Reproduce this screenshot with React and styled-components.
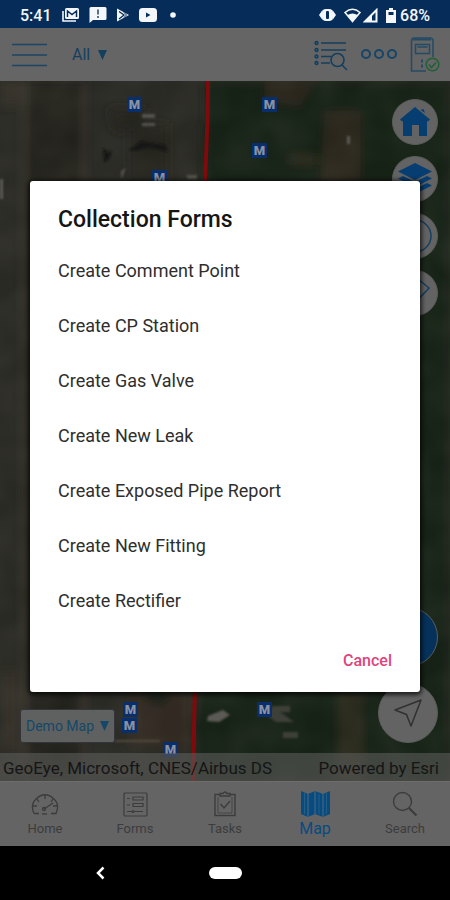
import styled, { createGlobalStyle } from "styled-components";

/* ---------------- global ---------------- */
const GlobalStyle = createGlobalStyle`
  * {
    box-sizing: border-box;
  }
  body {
    margin: 0;
    background-color: #000;
    font-family: Roboto, "Liberation Sans", sans-serif;
  }
  button, select {
    margin: 0;
    padding: 0;
    border: 0;
    background: none;
    color: inherit;
    font: inherit;
    cursor: pointer;
  }
  svg {
    display: block;
    flex: none;
  }
`;

const StyledScreen = styled.div`
  min-height: 100vh;
  display: flex;
  flex-direction: column;
`;

/* ---------------- status bar ---------------- */
const StyledStatus = styled.header`
  height: 28px;
  padding: 2px 20px 0;
  background-color: #062d5a;
  color: #f4f7fa;
  font-size: 16px;
  font-weight: 500;
  display: flex;
  justify-content: space-between;
  align-items: center;
`;
const StyledStatusGroup = styled.div`
  display: flex;
  align-items: center;
  gap: ${(props) => props.$gap}px;
`;

/* ---------------- app ---------------- */
const StyledApp = styled.div`
  flex: 1;
  position: relative;
  display: flex;
  flex-direction: column;
`;
const StyledToolbar = styled.nav`
  height: 53px;
  padding: 0 10px 0 12px;
  background-color: #656565;
  color: #153f5f;
  display: flex;
  align-items: center;
  justify-content: space-between;
`;
const StyledToolbarGroup = styled.div`
  display: flex;
  align-items: center;
  gap: ${(props) => props.$gap}px;
`;
const StyledPicker = styled.div`
  display: flex;
  align-items: center;
  gap: 8px;
  font-size: 16px;
`;
const StyledPickerSelect = styled.select`
  appearance: none;
  field-sizing: content;
`;

/* ---------------- map ---------------- */
const StyledMap = styled.main`
  flex: 1;
  position: relative;
  overflow: hidden;
  background-color: #292923;
  display: flex;
  flex-direction: column;
  justify-content: flex-end;
`;
const StyledAerial = styled.svg`
  position: absolute;
  top: 0;
  left: 0;
  width: 100%;
  height: 100%;
`;
const StyledMarker = styled.span`
  position: absolute;
  left: ${(props) => props.$x}px;
  top: ${(props) => props.$y}px;
  width: 15px;
  height: 15px;
  background-color: #082e6c;
  color: #8992a3;
  font-size: 13px;
  font-weight: 900;
  line-height: 15px;
  text-align: center;
`;
const StyledMapControls = styled.div`
  position: relative;
  flex: 1;
  padding: 18px 12px 10px 20px;
  display: flex;
  justify-content: space-between;
  align-items: stretch;
`;
const StyledMapColumn = styled.div`
  display: flex;
  flex-direction: column;
  justify-content: ${(props) => (props.$end ? "flex-end" : "space-between")};
  align-items: flex-end;
`;
const StyledMapButtons = styled.div`
  display: flex;
  flex-direction: column;
  align-items: flex-end;
  gap: ${(props) => props.$gap}px;
`;
const StyledRound = styled.button`
  width: ${(props) => props.$size}px;
  height: ${(props) => props.$size}px;
  border-radius: 50%;
  border: 1px solid #5b5d5b;
  background-color: ${(props) => (props.$primary ? "#05315a" : "#626362")};
  color: #073e72;
  display: flex;
  align-items: center;
  justify-content: center;
`;
const StyledBasemap = styled.div`
  height: 34px;
  padding: 0 5px;
  border: 1px solid #34353a;
  border-radius: 3px;
  background-color: #5f6060;
  color: #154868;
  font-size: 14px;
  display: flex;
  align-items: center;
  gap: 6px;
`;
const StyledCredits = styled.footer`
  position: relative;
  height: 28px;
  padding: 2px 11px 0 3px;
  background-color: rgba(92, 92, 90, 0.6);
  color: #151515;
  font-size: 17px;
  white-space: nowrap;
  display: flex;
  align-items: center;
  justify-content: space-between;
`;

/* ---------------- tabs ---------------- */
const StyledTabs = styled.nav`
  height: 65px;
  background-color: #646464;
  border-top: 1px solid #6d6d6b;
  display: flex;
`;
const StyledTab = styled.button`
  flex: 1;
  padding-bottom: 8px;
  color: ${(props) => (props.$active ? "#084b80" : "#3c3c3c")};
  font-size: ${(props) => (props.$active ? 16 : 13)}px;
  line-height: 18px;
  display: flex;
  flex-direction: column;
  align-items: center;
  justify-content: flex-end;
  gap: 3px;
`;

/* ---------------- dialog ---------------- */
const StyledOverlay = styled.div`
  position: absolute;
  inset: 0;
  padding: 0 30px 2px;
  display: flex;
  align-items: center;
`;
const StyledDialog = styled.section`
  flex: 1;
  padding: 25px 28px 17px;
  border-radius: 3px;
  background-color: #fff;
  box-shadow: 0 1px 4px 2px rgba(0, 0, 0, 0.7);
  color: #2e2e2e;
`;
const StyledDialogTitle = styled.h1`
  margin: 0;
  color: #151515;
  font-size: 23px;
  font-weight: 500;
  line-height: 28px;
`;
const StyledFormList = styled.ul`
  margin: 9px 0 19px;
  padding: 0;
  list-style: none;
`;
const StyledFormButton = styled.button`
  width: 100%;
  height: 55px;
  font-size: 18px;
  text-align: left;
`;
const StyledDialogActions = styled.div`
  display: flex;
  justify-content: flex-end;
`;
const StyledCancel = styled.button`
  height: 28px;
  color: #e0447a;
  font-size: 16px;
  font-weight: 500;
`;

/* ---------------- system navigation ---------------- */
const StyledSystemNav = styled.footer`
  height: 54px;
  background-color: #000;
  display: grid;
  grid-template-columns: 2fr 1fr 2fr;
  align-items: center;
`;
const StyledBack = styled.button`
  justify-self: center;
  padding: 6px;
  margin-left: 20px;
`;
const StyledHomePill = styled.button`
  justify-self: center;
  width: 33px;
  height: 12px;
  border-radius: 6px;
  background-color: #fff;
`;

/* ---------------- data ---------------- */
const forms = [
  "Create Comment Point",
  "Create CP Station",
  "Create Gas Valve",
  "Create New Leak",
  "Create Exposed Pipe Report",
  "Create New Fitting",
  "Create Rectifier",
];

const markers = [
  [127, 16],
  [262, 16],
  [252, 62],
  [152, 89],
  [123, 621],
  [122, 637],
  [257, 621],
  [163, 661],
];

/* ---------------- icons ---------------- */
const Arrow = () => (
  <svg width="9" height="10" viewBox="0 0 9 10" fill="currentColor">
    <path d="M0 0h9L4.500 10z" />
  </svg>
);

const StatusLeftIcons = () => (
  <>
    <svg width="19" height="16" viewBox="0 0 19 16">
      <path d="M2 4v10h13" fill="none" stroke="#f4f7fa" strokeWidth="1.600" />
      <rect x="4" y="1" width="14" height="11" rx="1.500" fill="#f4f7fa" />
      <path d="M6.500 10V4l4.500 3.600L15.500 4v6" fill="none" stroke="#062d5a" strokeWidth="1.500" />
    </svg>
    <svg width="18" height="16" viewBox="0 0 18 16">
      <path d="M2 0h14q1.500 0 1.500 1.500v10q0 1.500-1.500 1.500H4l-3.500 3V1.500Q.500 0 2 0z" fill="#f4f7fa" />
      <path d="M9 2.500v5M9 9v2" stroke="#566f8b" strokeWidth="2" />
    </svg>
    <svg width="14" height="16" viewBox="0 0 14 16">
      <path d="M1 1.500v13L13 8z" fill="#f4f7fa" />
      <path d="M3 4.500 8 8l-5 4" fill="none" stroke="#062d5a" strokeWidth="1.300" />
      <path d="m8 5.500 2.500 2.500L8 10.500" fill="none" stroke="#062d5a" strokeWidth="1" />
    </svg>
    <svg width="18" height="14" viewBox="0 0 18 14">
      <rect width="18" height="14" rx="3.500" fill="#f4f7fa" />
      <path d="M7 4.500v5L11.500 7z" fill="#062d5a" />
    </svg>
    <svg width="10" height="6" viewBox="0 0 10 6">
      <circle cx="7" cy="3" r="2.800" fill="#f4f7fa" />
    </svg>
  </>
);

const StatusRightIcons = () => (
  <>
    <svg width="17" height="14" viewBox="0 0 17 14">
      <path d="M0 7 3.500 2v10zM17 7l-3.500-5v10z" fill="#f4f7fa" />
      <rect x="3" y="1" width="11" height="12" rx="4" fill="#f4f7fa" />
      <rect x="7" y="3" width="3" height="8" rx="1" fill="#062d5a" />
    </svg>
    <StyledStatusGroup $gap={2}>
      <svg width="17" height="15" viewBox="0 0 17 15">
        <path d="M1 4.500Q8.500-2 16 4.500L8.500 13.500z" fill="none" stroke="#f4f7fa" strokeWidth="1.600" />
        <path d="M3.500 7Q8.500 4 13.500 7l-5 7z" fill="#f4f7fa" />
      </svg>
      <svg width="15" height="15" viewBox="0 0 15 15">
        <path d="M2 13.500 13.500 2v11.500z" fill="none" stroke="#f4f7fa" strokeWidth="2" />
        <path d="M2 13.500 9 6.500v7z" fill="#f4f7fa" />
      </svg>
    </StyledStatusGroup>
    <StyledStatusGroup $gap={4}>
      <svg width="10" height="15" viewBox="0 0 10 15">
        <path d="M3 0h4v2h3v13H0V2h3z" fill="#f4f7fa" />
        <path d="M2.500 4h5v3h-5z" fill="#062d5a" />
      </svg>
      <span>68%</span>
    </StyledStatusGroup>
  </>
);

const MenuIcon = () => (
  <svg width="35" height="24" viewBox="0 0 35 24" stroke="#1b4665" strokeWidth="1.600">
    <path d="M0 1.500h35M0 12h35M0 22.500h35" />
  </svg>
);

const ListSearchIcon = () => (
  <svg width="34" height="32" viewBox="0 0 34 32" fill="none" stroke="#153f5f" strokeWidth="1.600">
    <path d="M7 4h25M7 11h25M7 17.500h10M7 24h9" />
    <g fill="#315b72" strokeWidth="1.400">
      <circle cx="2.500" cy="4" r="1.500" />
      <circle cx="2.500" cy="11" r="1.500" />
      <circle cx="2.500" cy="17.500" r="1.500" />
      <circle cx="2.500" cy="24" r="1.500" />
    </g>
    <circle cx="23.500" cy="21" r="6.500" />
    <path d="m28 26 5 5" />
  </svg>
);

const DotsIcon = () => (
  <svg width="38" height="12" viewBox="0 0 38 12" fill="none" stroke="#164568" strokeWidth="2">
    <circle cx="6" cy="5" r="4" />
    <circle cx="19" cy="5" r="4" />
    <circle cx="32" cy="5" r="4" />
  </svg>
);

const DeviceIcon = () => (
  <svg width="30" height="36" viewBox="0 0 30 36" fill="none" stroke="#234a66" strokeWidth="1.500">
    <path d="M16 34H1.500V4Q1.500 1 4 1h16q3 0 3 3V20" />
    <path d="M3 2.500h18" strokeWidth="2" />
    <rect x="5.500" y="7.500" width="14" height="9" />
    <path d="M7.500 10h10" />
    <path d="M12 22.500v3M12 27.500v3" strokeWidth="2" />
    <circle cx="22.500" cy="27.500" r="6.300" fill="#656565" stroke="#1e6134" />
    <path d="m19 27.500 2.500 3 4.500-5" stroke="#1e6134" />
  </svg>
);

const HouseIcon = () => (
  <svg width="30" height="30" viewBox="0 0 30 30" fill="currentColor">
    <path d="M15 0 30 12.500l-2 2-1-.500v15h-8V18h-7v11H3V14l-1 .500-2-2z" />
    <path d="m20.500 3 3-1 1.500 4z" />
  </svg>
);

const LayersIcon = () => (
  <svg width="36" height="32" viewBox="0 0 36 32" fill="currentColor">
    <path d="M18 0 35 8.500 18 17 1 8.500z" />
    <path d="m6 13-5 2.500L18 24l17-8.500-5-2.500-12 6z" />
    <path d="m6 20-5 2.500L18 31l17-8.500-5-2.500-12 6z" />
  </svg>
);

const CompassIcon = () => (
  <svg width="36" height="36" viewBox="0 0 36 36" fill="none" stroke="#173f60">
    <circle cx="18" cy="18" r="16" strokeWidth="1.500" />
    <path d="m18 7 4 11-4 11-4-11z" />
  </svg>
);

const EraserIcon = () => (
  <svg width="34" height="32" viewBox="0 0 34 32" fill="none" stroke="#173f60" strokeWidth="1.600">
    <path d="M20 2 31 11 14 29 3 20z" />
    <path d="m11 12 10 9" />
  </svg>
);

const LocateIcon = () => (
  <svg width="30" height="30" viewBox="0 0 30 30" fill="none" stroke="#303133" strokeWidth="1.500">
    <path d="M28 2 18 28l-4.500-11.500L2 12z" strokeLinejoin="round" />
  </svg>
);

const GaugeIcon = () => (
  <svg width="28" height="24" viewBox="0 0 28 24" fill="none" stroke="currentColor" strokeWidth="1.300">
    <path d="M3 20.500Q-1 12 5 6q9-8.500 18 0 6 6 2 14.500h-5M3 20.500h5" />
    <path d="M14 2v4M6 6l2 3M2 13h4M22 6l-2 3M26 13h-4" />
    <path d="m13 16 9-6" />
    <circle cx="13" cy="16" r="1.500" />
    <path d="M11 21h5" />
  </svg>
);

const FormsIcon = () => (
  <svg width="25" height="25" viewBox="0 0 25 25" fill="none" stroke="currentColor" strokeWidth="1.200">
    <rect x="1" y="1" width="23" height="23" rx="1" />
    <path d="M4 6.500h3M4 13h3M4 19.500h5M10 5h10v3H10zM10 11.500h10v3H10zM11 19.500h9" />
    <circle cx="10" cy="19.500" r="1" />
  </svg>
);

const TasksIcon = () => (
  <svg width="22" height="26" viewBox="0 0 22 26" fill="none" stroke="currentColor" strokeWidth="1.400">
    <path d="M6 3.500H1v21h20v-21h-5" />
    <path d="M4 6v16h14V6" strokeWidth="0.800" />
    <path d="M6 5V2.500h3Q11-.500 13 2.500h3V5z" />
    <path d="m6.500 13 3.500 4 6-7" />
  </svg>
);

const MapIcon = () => (
  <svg width="29" height="26" viewBox="0 0 29 26">
    <path d="m0 0 7 3 7-3 8 3 7-3v23l-7 3-8-3-7 3-7-3z" fill="#084b80" />
    <path d="M7 3v23M14 0v23M22 3v23" stroke="#41687f" strokeWidth="1.200" />
    <path d="M3.500 2v21M18 3v20M25.500 2v21" stroke="#265e83" />
  </svg>
);

const SearchIcon = () => (
  <svg width="26" height="26" viewBox="0 0 26 26" fill="none" stroke="currentColor">
    <circle cx="10.500" cy="10.500" r="9" strokeWidth="1.400" />
    <path d="m17 17 7.500 7.500" strokeWidth="2.200" />
  </svg>
);

const tabs = [
  { label: "Home", icon: <GaugeIcon /> },
  { label: "Forms", icon: <FormsIcon /> },
  { label: "Tasks", icon: <TasksIcon /> },
  { label: "Map", icon: <MapIcon />, active: true },
  { label: "Search", icon: <SearchIcon /> },
];

/* ---------------- aerial ---------------- */
const Aerial = () => (
  <StyledAerial viewBox="0 0 450 700" preserveAspectRatio="none" aria-hidden="true">
    <defs>
      <filter id="soft" x="-10%" y="-10%" width="120%" height="120%">
        <feGaussianBlur stdDeviation="4" />
      </filter>
      <filter id="fine">
        <feGaussianBlur stdDeviation="1" />
      </filter>
      <filter id="ground" x="0" y="0" width="100%" height="100%">
        <feTurbulence type="fractalNoise" baseFrequency="0.027" numOctaves="2" seed="8" />
        <feColorMatrix values="0 0 0 0 0.25  0 0 0 0 0.23  0 0 0 0 0.18  0.9 0 0 0 -0.25" />
      </filter>
    </defs>
    <path d="M0 0h450v700H0z" fill="#2a2a25" />
    <g filter="url(#soft)">
      <path d="M28 0h52v700H28z" fill="#24241f" />
      <path d="M22 0h5v700h-5zM81 0h4v700h-4z" fill="#35332b" />
      <path d="M0 0h22v25H0zM0 590h20v80H0z" fill="#302f26" />
      <path d="M205 0h245v700H194z" fill="#182018" />
      <path d="M265 0h50l-15 25-35-5zM325 30h35v80h-40z" fill="#2a271f" />
      <path d="M290 72h25v12h-25zM338 610h25v90h-25z" fill="#29291f" />
      <path d="M108 27h38v23h-32zM128 42h40v60h-40z" fill="#22221e" />
      <path d="M132 610h60v55h-60z" fill="#302c22" />
      <ellipse cx="157" cy="615" rx="12" ry="10" fill="#1d201a" />
    </g>
    <path d="M0 0h450v700H0z" filter="url(#ground)" opacity="0.2" />
    <g filter="url(#fine)">
      <path d="M142 33h13v4h-13zM142 42h13v3h-13z" fill="#54534e" />
      <path d="M103 67l4 4 5-1-3 8-5 3zM129 69l13-9 7 2 16 2 3 7-20-5-12 4z" fill="#161614" />
      <path d="m121 90 5-3-5 12zM186 94h11v4h-9z" fill="#55534c" />
      <path d="M208 635l15-6 7 5-11 7-12-1zM0 98h3v20H0z" fill="#5b5a54" />
      <path d="M272 625h18v6h-10l14 10h-18l-8-6zM283 651h15v6h-15z" fill="#3c3f38" />
      <path d="M347 55h3v8h-3z" fill="#5b5c55" />
      <path d="M115 659h45v2h-45z" fill="#504b3d" />
    </g>
    <path d="M208 0q0 35-3 100L193 700" fill="none" stroke="#7f0a0c" strokeWidth="4" />
  </StyledAerial>
);

/* ---------------- jsx ---------------- */
const App = () => {
  return (
    <StyledScreen>
      <GlobalStyle />

      <StyledStatus>
        <StyledStatusGroup $gap={9}>
          <span>5:41</span>
          <StatusLeftIcons />
        </StyledStatusGroup>
        <StyledStatusGroup $gap={8}>
          <StatusRightIcons />
        </StyledStatusGroup>
      </StyledStatus>

      <StyledApp>
        <StyledToolbar>
          <StyledToolbarGroup $gap={25}>
            <button aria-label="Menu"><MenuIcon /></button>
            <StyledPicker>
              <StyledPickerSelect aria-label="Layer filter">
                <option>All</option>
              </StyledPickerSelect>
              <Arrow />
            </StyledPicker>
          </StyledToolbarGroup>
          <StyledToolbarGroup $gap={12}>
            <button aria-label="Search list"><ListSearchIcon /></button>
            <button aria-label="More"><DotsIcon /></button>
            <button aria-label="Device status"><DeviceIcon /></button>
          </StyledToolbarGroup>
        </StyledToolbar>

        <StyledMap>
          <Aerial />
          {markers.map(([x, y]) => (
            <StyledMarker key={`${x}-${y}`} $x={x} $y={y}>M</StyledMarker>
          ))}
          <StyledMapControls>
            <StyledMapColumn $end>
              <StyledBasemap>
                <StyledPickerSelect aria-label="Map">
                  <option>Demo Map</option>
                </StyledPickerSelect>
                <Arrow />
              </StyledBasemap>
            </StyledMapColumn>
            <StyledMapColumn>
              <StyledMapButtons $gap={11}>
                <StyledRound $size={46} aria-label="Home extent"><HouseIcon /></StyledRound>
                <StyledRound $size={46} aria-label="Layers"><LayersIcon /></StyledRound>
                <StyledRound $size={46} aria-label="Compass"><CompassIcon /></StyledRound>
                <StyledRound $size={46} aria-label="Clear"><EraserIcon /></StyledRound>
              </StyledMapButtons>
              <StyledMapButtons $gap={16}>
                <StyledRound $size={60} $primary aria-label="Add" />
                <StyledRound $size={60} aria-label="Locate"><LocateIcon /></StyledRound>
              </StyledMapButtons>
            </StyledMapColumn>
          </StyledMapControls>
          <StyledCredits>
            <span>GeoEye, Microsoft, CNES/Airbus DS</span>
            <span>Powered by Esri</span>
          </StyledCredits>
        </StyledMap>

        <StyledTabs>
          {tabs.map((tab) => (
            <StyledTab key={tab.label} $active={tab.active}>
              {tab.icon}
              <span>{tab.label}</span>
            </StyledTab>
          ))}
        </StyledTabs>

        <StyledOverlay>
          <StyledDialog role="dialog" aria-labelledby="dialog-title">
            <StyledDialogTitle id="dialog-title">Collection Forms</StyledDialogTitle>
            <StyledFormList>
              {forms.map((form) => (
                <li key={form}>
                  <StyledFormButton>{form}</StyledFormButton>
                </li>
              ))}
            </StyledFormList>
            <StyledDialogActions>
              <StyledCancel>Cancel</StyledCancel>
            </StyledDialogActions>
          </StyledDialog>
        </StyledOverlay>
      </StyledApp>

      <StyledSystemNav>
        <StyledBack aria-label="Back">
          <svg width="9" height="14" viewBox="0 0 9 14" fill="none" stroke="#fff" strokeWidth="2.500">
            <path d="M7.500 1.500 2 7l5.500 5.500" />
          </svg>
        </StyledBack>
        <StyledHomePill aria-label="Home screen" />
      </StyledSystemNav>
    </StyledScreen>
  );
};

export default App;
